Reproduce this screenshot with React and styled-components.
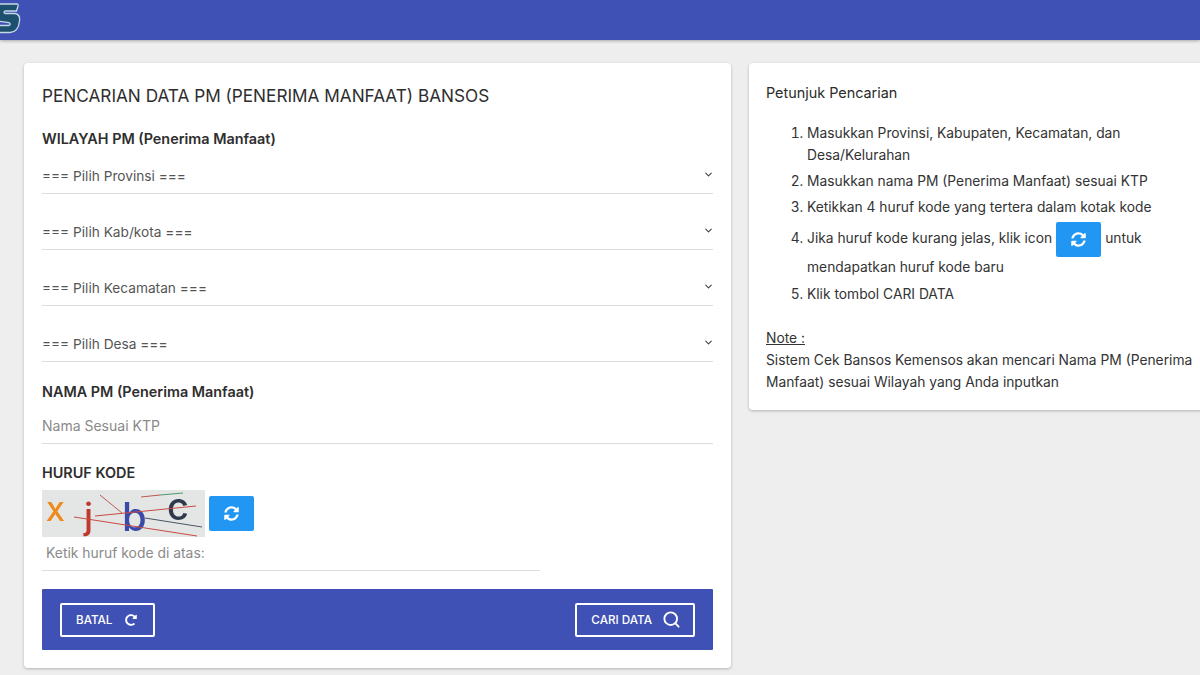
import React from "react";
import styled, { createGlobalStyle } from "styled-components";
import { ChevronDown, Search } from "lucide-react";
import { FaRedoAlt, FaSyncAlt } from "react-icons/fa";

const GlobalStyle = createGlobalStyle`
  html, body {
    margin: 0;
    padding: 0;
    width: 1200px;
    height: 675px;
    overflow: hidden;
    background: #eeeeee;
    font-family: "Inter", "Liberation Sans", sans-serif;
    color: #2b2b2b;
  }
  * { box-sizing: border-box; }
`;

const selects = [
  "=== Pilih Provinsi ===",
  "=== Pilih Kab/kota ===",
  "=== Pilih Kecamatan ===",
  "=== Pilih Desa ===",
];

const Logo = () => (
  <LogoMark width="22" height="36" viewBox="0 0 22 36">
    <path
      d="M-3 4 H17 Q18.5 4 18 6 L16.5 11 H5 Q3 12 5 13.5 H15 Q20.5 14.5 19.5 21 Q18.5 32 10 32.5 H-3 V25.5 H9 Q11.5 24.5 9 22.5 L-3 21 Z"
      fill="#1d4f6e"
      stroke="#c3d9e6"
      strokeWidth="1.3"
    />
  </LogoMark>
);

const Captcha = () => (
  <CaptchaImage width="163" height="47" viewBox="0 0 163 47">
    <rect width="163" height="47" fill="#e4e6e5" />
    <text x="4" y="31" fontFamily="Inter, sans-serif" fontSize="26" fontWeight="600" fill="#ee8a1d">X</text>
    <text x="42" y="39" fontFamily="Inter, sans-serif" fontSize="36" fontWeight="500" fill="#c0392f">j</text>
    <text x="80" y="41" fontFamily="Inter, sans-serif" fontSize="40" fontWeight="500" fill="#3b4aa8">b</text>
    <text x="125" y="30" fontFamily="Inter, sans-serif" fontSize="38" fontWeight="500" fill="#2f3a4c">c</text>
    <g fill="none" strokeWidth="1">
      <path d="M32 27 L155 46" stroke="#c84a44" />
      <path d="M53 26 L154 16" stroke="#c84a44" />
      <path d="M58 5 L80 23" stroke="#b85a54" />
      <path d="M103 28 L160 37" stroke="#4a5560" />
      <path d="M99 7 L118 5" stroke="#c0564f" />
      <path d="M118 5 L141 3" stroke="#4f9a6a" />
    </g>
  </CaptchaImage>
);

const App = () => {
  return (
    <>
      <GlobalStyle />
      <Header>
        <Logo />
      </Header>
      <Content>
        <MainCard>
          <Title>PENCARIAN DATA PM (PENERIMA MANFAAT) BANSOS</Title>
          <SectionLabel>WILAYAH PM (Penerima Manfaat)</SectionLabel>
          <SelectList>
            {selects.map((label) => (
              <SelectRow key={label}>
                {label}
                <ChevronDown size={11} strokeWidth={2.4} color="#444" />
              </SelectRow>
            ))}
          </SelectList>
          <NameLabel>NAMA PM (Penerima Manfaat)</NameLabel>
          <NameInput>Nama Sesuai KTP</NameInput>
          <CodeLabel>HURUF KODE</CodeLabel>
          <CaptchaRow>
            <Captcha />
            <RefreshButton>
              <FaSyncAlt size={15} />
            </RefreshButton>
          </CaptchaRow>
          <CodeInput>Ketik huruf kode di atas:</CodeInput>
          <ActionBar>
            <OutlineButton>
              BATAL
              <FaRedoAlt size={12} />
            </OutlineButton>
            <OutlineButton>
              CARI DATA
              <Search size={19} strokeWidth={2.4} />
            </OutlineButton>
          </ActionBar>
        </MainCard>
        <HelpCard>
          <HelpTitle>Petunjuk Pencarian</HelpTitle>
          <Steps>
            <li>Masukkan Provinsi, Kabupaten, Kecamatan, dan Desa/Kelurahan</li>
            <li>Masukkan nama PM (Penerima Manfaat) sesuai KTP</li>
            <li>Ketikkan 4 huruf kode yang tertera dalam kotak kode</li>
            <IconStep>
              Jika huruf kode kurang jelas, klik icon
              <InlineButton>
                <FaSyncAlt size={15} />
              </InlineButton>
              untuk mendapatkan huruf kode baru
            </IconStep>
            <li>Klik tombol CARI DATA</li>
          </Steps>
          <NoteTitle>Note :</NoteTitle>
          <NoteText>
            Sistem Cek Bansos Kemensos akan mencari Nama PM (Penerima Manfaat)
            sesuai Wilayah yang Anda inputkan
          </NoteText>
        </HelpCard>
      </Content>
    </>
  );
};

const Header = styled.header`
  height: 40px;
  background: #3f51b5;
  box-shadow: 0 1px 3px rgba(0, 0, 0, 0.3);
  overflow: hidden;
`;

const LogoMark = styled.svg`
  display: block;
`;

const CaptchaImage = styled.svg`
  display: block;
  overflow: visible;
  filter: blur(0.4px);
`;

const Content = styled.main`
  display: grid;
  grid-template-columns: 707px 470px;
  column-gap: 18px;
  align-items: start;
  padding: 23px 0 0 24px;
`;

const Card = styled.section`
  background: #fff;
  border-radius: 4px;
  box-shadow: 0 1px 3px rgba(0, 0, 0, 0.25);
`;

const MainCard = styled(Card)`
  height: 605px;
  padding: 21px 18px 0;
`;

const Title = styled.h1`
  margin: 0;
  font-size: 17.2px;
  line-height: 24px;
  font-weight: 400;
  color: #2e2e2e;
`;

const SectionLabel = styled.div`
  margin-top: 21px;
  font-size: 14.4px;
  line-height: 20px;
  font-weight: 600;
  color: #2e2e2e;
`;

const SelectList = styled.div`
  margin-top: 9px;
  display: flex;
  flex-direction: column;
  gap: 20px;
`;

const SelectRow = styled.div`
  height: 36px;
  display: flex;
  align-items: center;
  justify-content: space-between;
  font-size: 13.7px;
  color: #555;
  border-bottom: 1px solid #dcdcdc;

  svg {
    margin: 0 -1px 2px 0;
  }
`;

const NameLabel = styled(SectionLabel)`
  margin-top: 20px;
`;

const NameInput = styled.div`
  margin-top: 6px;
  height: 36px;
  display: flex;
  align-items: center;
  font-size: 14px;
  color: #8a8a8a;
  border-bottom: 1px solid #dcdcdc;
`;

const CodeLabel = styled(SectionLabel)`
  margin-top: 19px;
`;

const CaptchaRow = styled.div`
  margin-top: 7px;
  display: flex;
  align-items: center;
  gap: 4px;
`;

const RefreshButton = styled.div`
  width: 45px;
  height: 35px;
  display: flex;
  align-items: center;
  justify-content: center;
  background: #2196f3;
  border-radius: 2px;
  color: #fff;
`;

const CodeInput = styled.div`
  width: 498px;
  height: 34px;
  padding: 0 0 2px 4px;
  display: flex;
  align-items: center;
  font-size: 13.9px;
  color: #8a8a8a;
  border-bottom: 1px solid #dcdcdc;
`;

const ActionBar = styled.div`
  margin-top: 18px;
  height: 61px;
  padding: 0 18px;
  display: flex;
  align-items: center;
  justify-content: space-between;
  background: #3f51b5;
  border-radius: 1px;
`;

const OutlineButton = styled.div`
  height: 34px;
  padding: 0 16px 0 14px;
  display: flex;
  align-items: center;
  gap: 13px;
  font-size: 11.7px;
  font-weight: 500;
  color: #fff;
  border: 2px solid #fff;
  border-radius: 2px;

  .lucide-search {
    margin: 0 -4px 0 -3px;
  }
`;

const HelpCard = styled(Card)`
  height: 347px;
  padding: 19px 0 0 17px;
  border-radius: 4px 0 0 4px;
`;

const HelpTitle = styled.h2`
  margin: 1px 0 0;
  font-size: 14.4px;
  line-height: 20px;
  font-weight: 400;
  color: #2b2b2b;
`;

const Steps = styled.ol`
  margin: 19px 0 0;
  padding: 0 0 0 41px;
  width: 400px;
  font-size: 13.8px;
  line-height: 22px;
  color: #333;

  li {
    margin-bottom: 4px;
  }
`;

const IconStep = styled.li`
  && {
    margin: 6px 0 1px;
  }
  line-height: 29px;
`;

const InlineButton = styled.span`
  display: inline-flex;
  align-items: center;
  justify-content: center;
  width: 45px;
  height: 35px;
  margin: -4px 4px;
  vertical-align: middle;
  background: #2196f3;
  border-radius: 2px;
  color: #fff;
`;

const NoteTitle = styled.div`
  margin-top: 22px;
  font-size: 13.8px;
  line-height: 22px;
  text-decoration: underline;
  color: #333;
`;

const NoteText = styled.p`
  margin: 0;
  width: 440px;
  font-size: 13.8px;
  line-height: 22px;
  color: #333;
`;

export default App;
